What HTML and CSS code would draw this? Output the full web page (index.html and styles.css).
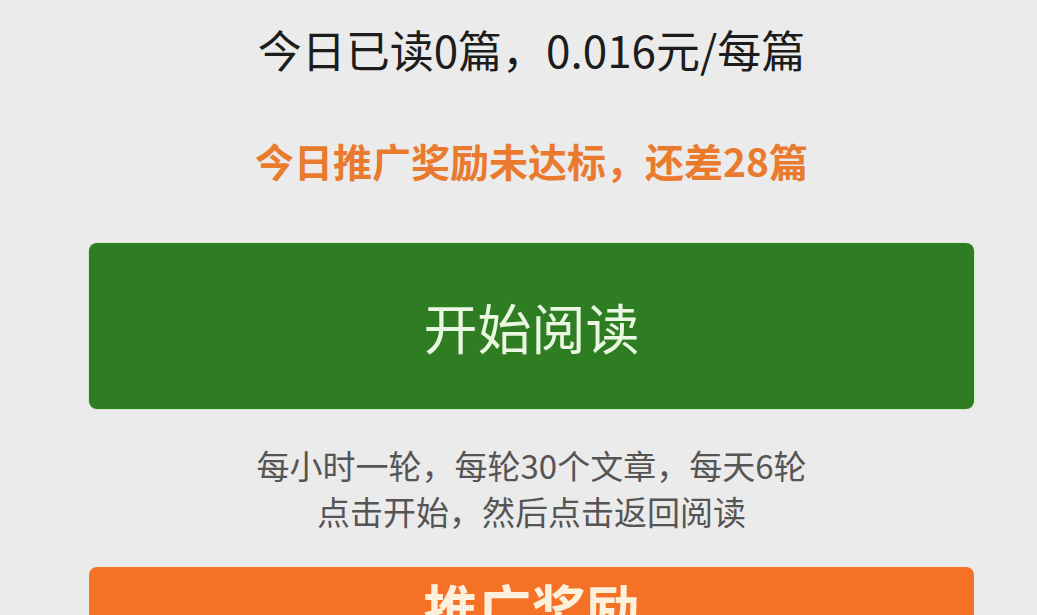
FILE: index.html
```html
<!DOCTYPE html>
<html lang="zh-CN">
<head>
<meta charset="utf-8">
<title>阅读</title>
<link rel="stylesheet" href="styles.css">
</head>
<body>
<main class="page">
  <p class="title">今日已读0篇，0.016元/每篇</p>
  <p class="warn">今日推广奖励未达标，还差28篇</p>
  <button class="btn btn-green">开始阅读</button>
  <div class="desc">
    <p>每小时一轮，每轮30个文章，每天6轮</p>
    <p>点击开始，然后点击返回阅读</p>
  </div>
  <button class="btn btn-orange">推广奖励</button>
</main>
</body>
</html>
```
FILE: styles.css
```css
html, body {
  margin: 0;
  padding: 0;
  background: #ebebeb;
  height: 100%;
  overflow: hidden;
}
body {
  font-family: "Noto Sans CJK SC", "Noto Sans", sans-serif;
}
.page {
  display: flex;
  flex-direction: column;
  align-items: center;
  padding: 19px 63px 0 89px;
}
.page p {
  margin: 0;
}
.title {
  font-size: 44px;
  line-height: 60px;
  color: #1c1c1c;
}
.warn {
  margin-top: 51px !important;
  font-size: 39px;
  line-height: 60px;
  font-weight: 700;
  color: #e97a2e;
}
.btn {
  width: 885px;
  border: none;
  border-radius: 8px;
  font-family: inherit;
  flex-shrink: 0;
}
.btn-green {
  margin-top: 53px;
  height: 166px;
  background: #2f7d22;
  color: #eaf7e2;
  font-size: 54px;
  box-shadow: 0 0 0 1px #d5ecc8;
}
.desc {
  margin-top: 33px;
  text-align: center;
  color: #555555;
  font-size: 33px;
  line-height: 46px;
}
.btn-orange {
  margin-top: 33px;
  height: 80px;
  background: #f47125;
  color: #fdf1de;
  font-size: 54px;
  font-weight: 700;
}
```
